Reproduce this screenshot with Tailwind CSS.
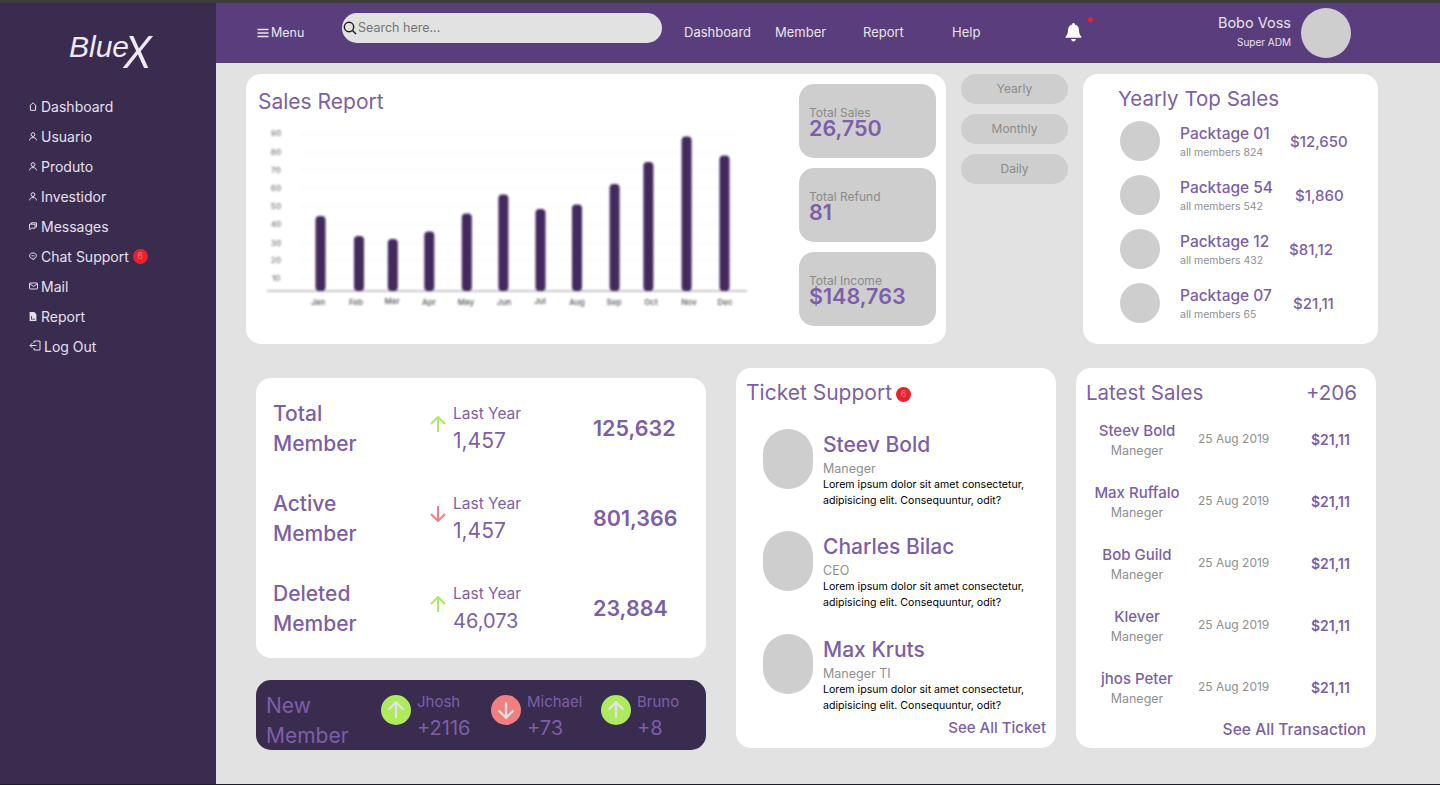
<!DOCTYPE html>
<html lang="en">
<head>
    <meta charset="UTF-8">
    <meta name="viewport" content="width=device-width, initial-scale=1.0">
    <title>BlueX Dashboard</title>
    <script src="https://cdn.jsdelivr.net/npm/@tailwindcss/browser@4"></script>
</head>
<body class="bg-[#e2e2e2] font-['Inter',sans-serif] overflow-hidden">
<div class="h-[3px] bg-[#3d3d3d]"></div>
<div class="flex h-[781px]">
    <!-- sidebar -->
    <aside class="w-[216px] shrink-0 bg-[#392c4f] text-[#e6e0ec] text-[14px]">
        <div class="h-[88px] pl-[69px] pt-[19px] font-['Liberation_Sans',sans-serif] italic text-[#efe9f5] leading-[50px] whitespace-nowrap">
            <span class="text-[30px]">Blue</span><span class="inline-block text-[47px] ml-[-7px] scale-x-90 align-[-11px]">X</span>
        </div>
        <nav class="pl-[29px]">
            <a class="h-[30px] flex items-center gap-[4px]"><svg class="w-[8px] h-[9px]" viewBox="0 0 8 9" fill="none" stroke="currentColor"><path d="M.7 4 4 .8 7.3 4M1.4 3.6v4.7h5.2V3.6"/></svg>Dashboard</a>
            <a class="h-[30px] flex items-center gap-[4px]"><svg class="w-[8px] h-[9px]" viewBox="0 0 8 9" fill="none" stroke="currentColor"><circle cx="4" cy="2.6" r="1.9"/><path d="M.5 8.4C.7 6.4 2 5.6 4 5.6s3.3.8 3.5 2.8"/></svg>Usuario</a>
            <a class="h-[30px] flex items-center gap-[4px]"><svg class="w-[8px] h-[9px]" viewBox="0 0 8 9" fill="none" stroke="currentColor"><circle cx="4" cy="2.6" r="1.9"/><path d="M.5 8.4C.7 6.4 2 5.6 4 5.6s3.3.8 3.5 2.8"/></svg>Produto</a>
            <a class="h-[30px] flex items-center gap-[4px]"><svg class="w-[8px] h-[9px]" viewBox="0 0 8 9" fill="none" stroke="currentColor"><circle cx="4" cy="2.6" r="1.9"/><path d="M.5 8.4C.7 6.4 2 5.6 4 5.6s3.3.8 3.5 2.8"/></svg>Investidor</a>
            <a class="h-[30px] flex items-center gap-[4px]"><svg class="w-[8px] h-[9px]" viewBox="0 0 8 9" fill="none" stroke="currentColor"><path d="M2.2 2V.8h5.3v4H6.4M.5 2.2h5.6v4H2.4L.9 7.8V6.2H.5z"/></svg>Messages</a>
            <a class="h-[30px] flex items-center gap-[4px]"><svg class="w-[8px] h-[9px]" viewBox="0 0 8 9" fill="none" stroke="currentColor"><path d="M4 1C2 1 .5 2.1.5 3.8c0 1.6 1.5 2.7 3 2.7l.9 1.5.6-1.600c1.500-.4 2.500-1.400 2.500-2.600C7.500 2.100 6 1 4 1z"/><path d="M2.200 3.800h3.600" stroke-width=".8"/></svg>Chat Support<span class="w-[15px] h-[15px] rounded-full bg-[#ec1f2d] text-[#e07a80] text-[9px] flex items-center justify-center">6</span></a>
            <a class="h-[30px] flex items-center gap-[4px]"><svg class="w-[9px] h-[8px] mr-[-1px]" viewBox="0 0 9 8" fill="none" stroke="currentColor"><rect x=".5" y="1" width="8" height="6" rx=".6"/><path d="M.8 1.800 4.500 4.500 8.200 1.800"/></svg>Mail</a>
            <a class="h-[30px] flex items-center gap-[4px]"><svg class="w-[8px] h-[9px]" viewBox="0 0 8 9" fill="currentColor"><path d="M.6 0h4.600L7.400 2.200V9H.6zM2 4v3.500h4V6.800H2.800V4z"/></svg>Report</a>
            <a class="h-[30px] flex items-center gap-[3px]"><svg class="w-[12px] h-[12px]" viewBox="0 0 12 12" fill="none" stroke="currentColor"><path d="M5 3V1h6v9H5V8M7.500 5.500H1M3.500 3 1 5.500 3.500 8"/></svg>Log Out</a>
        </nav>
    </aside>

    <div class="flex-1 min-w-0">
        <!-- topbar -->
        <header class="h-[60px] bg-[#5a3d7c] flex items-center text-[#e8e4ee] text-[13px]">
            <svg class="w-[12px] h-[10px] ml-[41px]" viewBox="0 0 12 10" fill="none" stroke="currentColor" stroke-width="1.300"><path d="M.5 1.500h11M.5 5h11M.5 8.500h11"/></svg>
            <span class="ml-[2px] w-[71px] text-[12.500px]">Menu</span>
            <div class="w-[320px] h-[30px] mb-[10px] rounded-[15px] bg-[#e2e2e2] flex items-center pl-[1px] gap-[1px]">
                <svg class="w-[14px] h-[14px] text-[#1a1a1a]" viewBox="0 0 14 14" fill="none" stroke="currentColor" stroke-width="1.400"><circle cx="6" cy="6" r="4.700"/><path d="m9.500 9.500 3.500 3.500"/></svg>
                <span class="text-[#757575] text-[12.500px]">Search here...</span>
            </div>
            <a class="ml-[22px] w-[91px]">Dashboard</a>
            <a class="w-[88px]">Member</a>
            <a class="w-[89px]">Report</a>
            <a class="w-[113px]">Help</a>
            <svg class="w-[17px] h-[19px] mt-[-1px] text-white" viewBox="0 0 17 19" fill="currentColor"><path d="M8.500 0c.8 0 1.300.6 1.300 1.400 2.800.6 4.200 2.800 4.200 5.800 0 3 .7 4.500 2.300 6.200.4.500.1 1.300-.6 1.300H1.300c-.7 0-1-.8-.6-1.300C2.300 11.700 3 10.200 3 7.200c0-3 1.400-5.200 4.200-5.800C7.200.6 7.700 0 8.500 0zM6.200 16h4.600c0 1.300-1 2.500-2.300 2.500S6.200 17.300 6.200 16z"/></svg>
            <span class="w-[5px] h-[5px] rounded-full bg-[#ec1f2d] ml-[6px] mb-[28px]"></span>
            <div class="ml-auto text-right mr-[10px] whitespace-nowrap">
                <div class="text-[14.500px] leading-[20px] mb-[2px] mt-[-4px]">Bobo Voss</div>
                <div class="text-[10px] leading-[14px]">Super ADM</div>
            </div>
            <div class="w-[50px] h-[50px] rounded-full bg-[#cecece] mr-[89px]"></div>
        </header>

        <!-- top row -->
        <div class="flex pl-[30px] pt-[11px] gap-[15px]">
            <section class="w-[700px] h-[270px] bg-white rounded-[15px] flex pl-[12px] pr-[10px] pt-[10px] justify-between">
                <div>
                    <h2 class="text-[#7d5fa8] text-[21px] leading-[16px] mt-[10px] h-[28px] font-normal">Sales Report</h2>
                    <svg class="blur-[0.8px] w-[495px] h-[195px]" viewBox="258 122 495 195" font-family="Inter, sans-serif" font-size="8" font-weight="600" text-anchor="middle" fill="#666">
                        <g stroke="#f8f8f8"><path d="M300 134H735M300 152H735M300 170H735M300 188H735M300 206H735M300 224H735M300 243H735M300 260H735M300 278H735"/></g>
                        <path d="M267 291H747" stroke="#b7b2bd" stroke-width="1.500"/>
                        <g fill="#888"><text x="276" y="136">90</text><text x="276" y="155">80</text><text x="276" y="173">70</text><text x="276" y="191">60</text><text x="276" y="209">50</text><text x="276" y="227">40</text><text x="276" y="246">30</text><text x="276" y="263">20</text><text x="276" y="281">10</text></g>
                        <g fill="#44295f">
                            <rect x="315.500" y="216" width="10" height="75" rx="4"/>
                            <rect x="354" y="236" width="10" height="55" rx="4"/>
                            <rect x="387.800" y="239" width="10" height="52" rx="4"/>
                            <rect x="424.300" y="231.500" width="10" height="59.500" rx="4"/>
                            <rect x="461.800" y="213.500" width="10" height="77.500" rx="4"/>
                            <rect x="498.400" y="194.500" width="10" height="96.500" rx="4"/>
                            <rect x="535.500" y="209" width="10" height="82" rx="4"/>
                            <rect x="572" y="204.500" width="10" height="86.500" rx="4"/>
                            <rect x="609.600" y="184" width="10" height="107" rx="4"/>
                            <rect x="643.400" y="162" width="10" height="129" rx="4"/>
                            <rect x="681.600" y="136.500" width="10" height="154.500" rx="4"/>
                            <rect x="719.500" y="155.500" width="10" height="135.500" rx="4"/>
                        </g>
                        <g><text x="318" y="305">Jan</text><text x="356" y="305">Feb</text><text x="392" y="304">Mar</text><text x="429" y="305">Apr</text><text x="466" y="305">May</text><text x="504" y="305">Jun</text><text x="540" y="304">Jul</text><text x="577" y="305">Aug</text><text x="614" y="305">Sep</text><text x="651" y="305">Oct</text><text x="689" y="305">Nov</text><text x="725" y="305">Dec</text></g>
                    </svg>
                </div>
                <div class="w-[137px] flex flex-col gap-[10px]">
                    <div class="h-[74px] rounded-[15px] bg-[#cecece] pl-[10px] pt-[23px]">
                        <div class="text-[#8a8a8a] text-[12px] leading-[12px]">Total Sales</div>
                        <div class="text-[#7d5fa8] text-[21.500px] leading-[18px] font-semibold">26,750</div>
                    </div>
                    <div class="h-[74px] rounded-[15px] bg-[#cecece] pl-[10px] pt-[23px]">
                        <div class="text-[#8a8a8a] text-[12px] leading-[12px]">Total Refund</div>
                        <div class="text-[#7d5fa8] text-[21.500px] leading-[18px] font-semibold">81</div>
                    </div>
                    <div class="h-[74px] rounded-[15px] bg-[#cecece] pl-[10px] pt-[23px]">
                        <div class="text-[#8a8a8a] text-[12px] leading-[12px]">Total Income</div>
                        <div class="text-[#7d5fa8] text-[21.500px] leading-[18px] font-semibold">$148,763</div>
                    </div>
                </div>
            </section>

            <div class="w-[107px] flex flex-col gap-[10px] text-[#8a8a8a] text-[12px] text-center">
                <div class="h-[30px] rounded-[15px] bg-[#cecece] leading-[30px]">Yearly</div>
                <div class="h-[30px] rounded-[15px] bg-[#cecece] leading-[30px]">Monthly</div>
                <div class="h-[30px] rounded-[15px] bg-[#cecece] leading-[30px]">Daily</div>
            </div>

            <section class="w-[295px] h-[270px] bg-white rounded-[15px] pl-[35px] pt-[10px]">
                <h2 class="text-[#7d5fa8] text-[20.500px] leading-[30px] h-[37px] font-normal">Yearly Top Sales</h2>
                <div class="flex flex-col">
                    <div class="h-[54px] flex items-start pl-[2px]">
                        <div class="w-[40px] h-[40px] rounded-full bg-[#cecece]"></div>
                        <div class="w-[110px] ml-[20px] pt-[3px]">
                            <div class="text-[#7d5fa8] text-[15.500px] leading-[20px] font-medium">Packtage 01</div>
                            <div class="text-[#8f8f8f] text-[10.500px] leading-[17px]">all members 824</div>
                        </div>
                        <div class="text-[#7d5fa8] text-[15px] leading-[42px] font-medium">$12,650</div>
                    </div>
                    <div class="h-[54px] flex items-start pl-[2px]">
                        <div class="w-[40px] h-[40px] rounded-full bg-[#cecece]"></div>
                        <div class="w-[115px] ml-[20px] pt-[3px]">
                            <div class="text-[#7d5fa8] text-[15.500px] leading-[20px] font-medium">Packtage 54</div>
                            <div class="text-[#8f8f8f] text-[10.500px] leading-[17px]">all members 542</div>
                        </div>
                        <div class="text-[#7d5fa8] text-[15px] leading-[42px] font-medium">$1,860</div>
                    </div>
                    <div class="h-[54px] flex items-start pl-[2px]">
                        <div class="w-[40px] h-[40px] rounded-full bg-[#cecece]"></div>
                        <div class="w-[109px] ml-[20px] pt-[3px]">
                            <div class="text-[#7d5fa8] text-[15.500px] leading-[20px] font-medium">Packtage 12</div>
                            <div class="text-[#8f8f8f] text-[10.500px] leading-[17px]">all members 432</div>
                        </div>
                        <div class="text-[#7d5fa8] text-[15px] leading-[42px] font-medium">$81,12</div>
                    </div>
                    <div class="h-[54px] flex items-start pl-[2px]">
                        <div class="w-[40px] h-[40px] rounded-full bg-[#cecece]"></div>
                        <div class="w-[113px] ml-[20px] pt-[3px]">
                            <div class="text-[#7d5fa8] text-[15.500px] leading-[20px] font-medium">Packtage 07</div>
                            <div class="text-[#8f8f8f] text-[10.500px] leading-[17px]">all members 65</div>
                        </div>
                        <div class="text-[#7d5fa8] text-[15px] leading-[42px] font-medium">$21,11</div>
                    </div>
                </div>
            </section>
        </div>

        <!-- bottom row -->
        <div class="flex pl-[40px] mt-[24px]">
            <div class="w-[450px] mt-[10px]">
                <section class="h-[280px] bg-white rounded-[15px] pl-[17px] pt-[20px] flex flex-col gap-[30px] text-[#7d5fa8]">
                    <div class="h-[60px] flex">
                        <div class="w-[157px] text-[21px] leading-[30px] pt-[1px] font-medium">Total<br>Member</div>
                        <svg class="w-[16px] h-[16px] mt-[18px] text-[#a8ec60]" viewBox="0 0 16 16" fill="none" stroke="currentColor" stroke-width="2"><path d="M8 16V1M1 8l7-7 7 7"/></svg>
                        <div class="w-[140px] ml-[7px]">
                            <div class="text-[15.500px] leading-[32px] h-[29px]">Last Year</div>
                            <div class="text-[21px] leading-[28px]">1,457</div>
                        </div>
                        <div class="text-[21.500px] leading-[60px] font-semibold">125,632</div>
                    </div>
                    <div class="h-[60px] flex">
                        <div class="w-[157px] text-[21px] leading-[30px] pt-[1px] font-medium">Active<br>Member</div>
                        <svg class="w-[16px] h-[16px] mt-[18px] text-[#f47f7f]" viewBox="0 0 16 16" fill="none" stroke="currentColor" stroke-width="2"><path d="M8 0v15M1 8l7 7 7-7"/></svg>
                        <div class="w-[140px] ml-[7px]">
                            <div class="text-[15.500px] leading-[32px] h-[29px]">Last Year</div>
                            <div class="text-[21px] leading-[28px]">1,457</div>
                        </div>
                        <div class="text-[21.500px] leading-[60px] font-semibold">801,366</div>
                    </div>
                    <div class="h-[60px] flex">
                        <div class="w-[157px] text-[21px] leading-[30px] pt-[1px] font-medium">Deleted<br>Member</div>
                        <svg class="w-[16px] h-[16px] mt-[18px] text-[#a8ec60]" viewBox="0 0 16 16" fill="none" stroke="currentColor" stroke-width="2"><path d="M8 16V1M1 8l7-7 7 7"/></svg>
                        <div class="w-[140px] ml-[7px]">
                            <div class="text-[15.500px] leading-[32px] h-[29px]">Last Year</div>
                            <div class="text-[20px] leading-[28px]">46,073</div>
                        </div>
                        <div class="text-[21.500px] leading-[60px] font-semibold">23,884</div>
                    </div>
                </section>
                <section class="mt-[22px] h-[70px] bg-[#392c4f] rounded-[15px] flex pl-[10px] text-[#7d5fa8]">
                    <div class="w-[115px] text-[21px] leading-[30px] pt-[11px]">New<br>Member</div>
                    <div class="w-[110px] flex pt-[15px]">
                        <div class="w-[30px] h-[30px] rounded-full bg-[#aeea5e] flex items-center justify-center"><svg class="w-[18px] h-[18px] text-[#e2e2e2]" viewBox="0 0 16 16" fill="none" stroke="currentColor" stroke-width="2"><path d="M8 15V1M1.500 7.500 8 1l6.500 6.500"/></svg></div>
                        <div class="ml-[6px] mt-[-4px]"><div class="text-[15px] leading-[22px] h-[23px]">Jhosh</div><div class="text-[20px] leading-[28px]">+2116</div></div>
                    </div>
                    <div class="w-[110px] flex pt-[15px]">
                        <div class="w-[30px] h-[30px] rounded-full bg-[#f08080] flex items-center justify-center"><svg class="w-[18px] h-[18px] text-[#e2e2e2]" viewBox="0 0 16 16" fill="none" stroke="currentColor" stroke-width="2"><path d="M8 1v14M1.500 8.500 8 15l6.500-6.500"/></svg></div>
                        <div class="ml-[6px] mt-[-4px]"><div class="text-[15px] leading-[22px] h-[23px]">Michael</div><div class="text-[20px] leading-[28px]">+73</div></div>
                    </div>
                    <div class="flex pt-[15px]">
                        <div class="w-[30px] h-[30px] rounded-full bg-[#aeea5e] flex items-center justify-center"><svg class="w-[18px] h-[18px] text-[#e2e2e2]" viewBox="0 0 16 16" fill="none" stroke="currentColor" stroke-width="2"><path d="M8 15V1M1.500 7.500 8 1l6.500 6.500"/></svg></div>
                        <div class="ml-[6px] mt-[-4px]"><div class="text-[15px] leading-[22px] h-[23px]">Bruno</div><div class="text-[20px] leading-[28px]">+8</div></div>
                    </div>
                </section>
            </div>

            <section class="ml-[30px] w-[320px] h-[380px] bg-white rounded-[15px] pl-[10px] pr-[10px] pt-[10px] flex flex-col">
                <h2 class="flex items-center text-[#7d5fa8] text-[21px] leading-[30px] h-[30px] mb-[21px] font-normal">Ticket Support<span class="ml-[4px] mt-[2px] w-[15px] h-[15px] rounded-full bg-[#ec1f2d] text-[#e07a80] text-[9px] flex items-center justify-center">6</span></h2>
                <div class="h-[102px] flex pl-[17px]">
                    <div class="w-[50px] h-[60px] rounded-[25px] bg-[#cecece]"></div>
                    <div class="ml-[10px] w-[220px]">
                        <div class="text-[#7d5fa8] text-[21px] leading-[32px] font-medium">Steev Bold</div>
                        <div class="text-[#8f8f8f] text-[12.500px] leading-[15px]">Maneger</div>
                        <p class="text-[10.600px] leading-[16px] text-black mt-[1px]">Lorem ipsum dolor sit amet consectetur, adipisicing elit. Consequuntur, odit?</p>
                    </div>
                </div>
                <div class="h-[103px] flex pl-[17px]">
                    <div class="w-[50px] h-[60px] rounded-[25px] bg-[#cecece]"></div>
                    <div class="ml-[10px] w-[220px]">
                        <div class="text-[#7d5fa8] text-[21px] leading-[32px] font-medium">Charles Bilac</div>
                        <div class="text-[#8f8f8f] text-[12.500px] leading-[15px]">CEO</div>
                        <p class="text-[10.600px] leading-[16px] text-black mt-[1px]">Lorem ipsum dolor sit amet consectetur, adipisicing elit. Consequuntur, odit?</p>
                    </div>
                </div>
                <div class="flex pl-[17px]">
                    <div class="w-[50px] h-[60px] rounded-[25px] bg-[#cecece]"></div>
                    <div class="ml-[10px] w-[220px]">
                        <div class="text-[#7d5fa8] text-[21px] leading-[32px] font-medium">Max Kruts</div>
                        <div class="text-[#8f8f8f] text-[12.500px] leading-[15px]">Maneger TI</div>
                        <p class="text-[10.600px] leading-[16px] text-black mt-[1px]">Lorem ipsum dolor sit amet consectetur, adipisicing elit. Consequuntur, odit?</p>
                    </div>
                </div>
                <div class="text-right text-[#7d5fa8] text-[15px] leading-[20px] font-medium mt-[4px]">See All Ticket</div>
            </section>

            <section class="ml-[20px] w-[300px] h-[380px] bg-white rounded-[15px] pl-[10px] pr-[10px] pt-[10px]">
                <div class="flex justify-between text-[#7d5fa8] text-[20.500px] leading-[30px] h-[43px] pr-[9px]"><span>Latest Sales</span><span>+206</span></div>
                <div class="flex flex-col h-[299px] text-[#7d5fa8]">
                    <div class="h-[62px] shrink-0 flex">
                        <div class="w-[102px] text-center"><div class="text-[15px] leading-[20px] font-medium">Steev Bold</div><div class="text-[#8f8f8f] text-[12.500px] leading-[20px]">Maneger</div></div>
                        <div class="w-[123px] pl-[10px] text-[#8f8f8f] text-[12px] leading-[36px]">25 Aug 2019</div>
                        <div class="text-[14px] leading-[38px] font-semibold">$21,11</div>
                    </div>
                    <div class="h-[62px] shrink-0 flex">
                        <div class="w-[102px] text-center"><div class="text-[15px] leading-[20px] font-medium">Max Ruffalo</div><div class="text-[#8f8f8f] text-[12.500px] leading-[20px]">Maneger</div></div>
                        <div class="w-[123px] pl-[10px] text-[#8f8f8f] text-[12px] leading-[36px]">25 Aug 2019</div>
                        <div class="text-[14px] leading-[38px] font-semibold">$21,11</div>
                    </div>
                    <div class="h-[62px] shrink-0 flex">
                        <div class="w-[102px] text-center"><div class="text-[15px] leading-[20px] font-medium">Bob Guild</div><div class="text-[#8f8f8f] text-[12.500px] leading-[20px]">Maneger</div></div>
                        <div class="w-[123px] pl-[10px] text-[#8f8f8f] text-[12px] leading-[36px]">25 Aug 2019</div>
                        <div class="text-[14px] leading-[38px] font-semibold">$21,11</div>
                    </div>
                    <div class="h-[62px] shrink-0 flex">
                        <div class="w-[102px] text-center"><div class="text-[15px] leading-[20px] font-medium">Klever</div><div class="text-[#8f8f8f] text-[12.500px] leading-[20px]">Maneger</div></div>
                        <div class="w-[123px] pl-[10px] text-[#8f8f8f] text-[12px] leading-[36px]">25 Aug 2019</div>
                        <div class="text-[14px] leading-[38px] font-semibold">$21,11</div>
                    </div>
                    <div class="h-[51px] shrink-0 flex">
                        <div class="w-[102px] text-center"><div class="text-[15px] leading-[20px] font-medium">jhos Peter</div><div class="text-[#8f8f8f] text-[12.500px] leading-[20px]">Maneger</div></div>
                        <div class="w-[123px] pl-[10px] text-[#8f8f8f] text-[12px] leading-[36px]">25 Aug 2019</div>
                        <div class="text-[14px] leading-[38px] font-semibold">$21,11</div>
                    </div>
                </div>
                <div class="text-right text-[#7d5fa8] text-[15.600px] leading-[20px] font-medium">See All Transaction</div>
            </section>
        </div>
    </div>
</div>
<div class="h-[1px] bg-[#1c1c2c]"></div>
</body>
</html>
